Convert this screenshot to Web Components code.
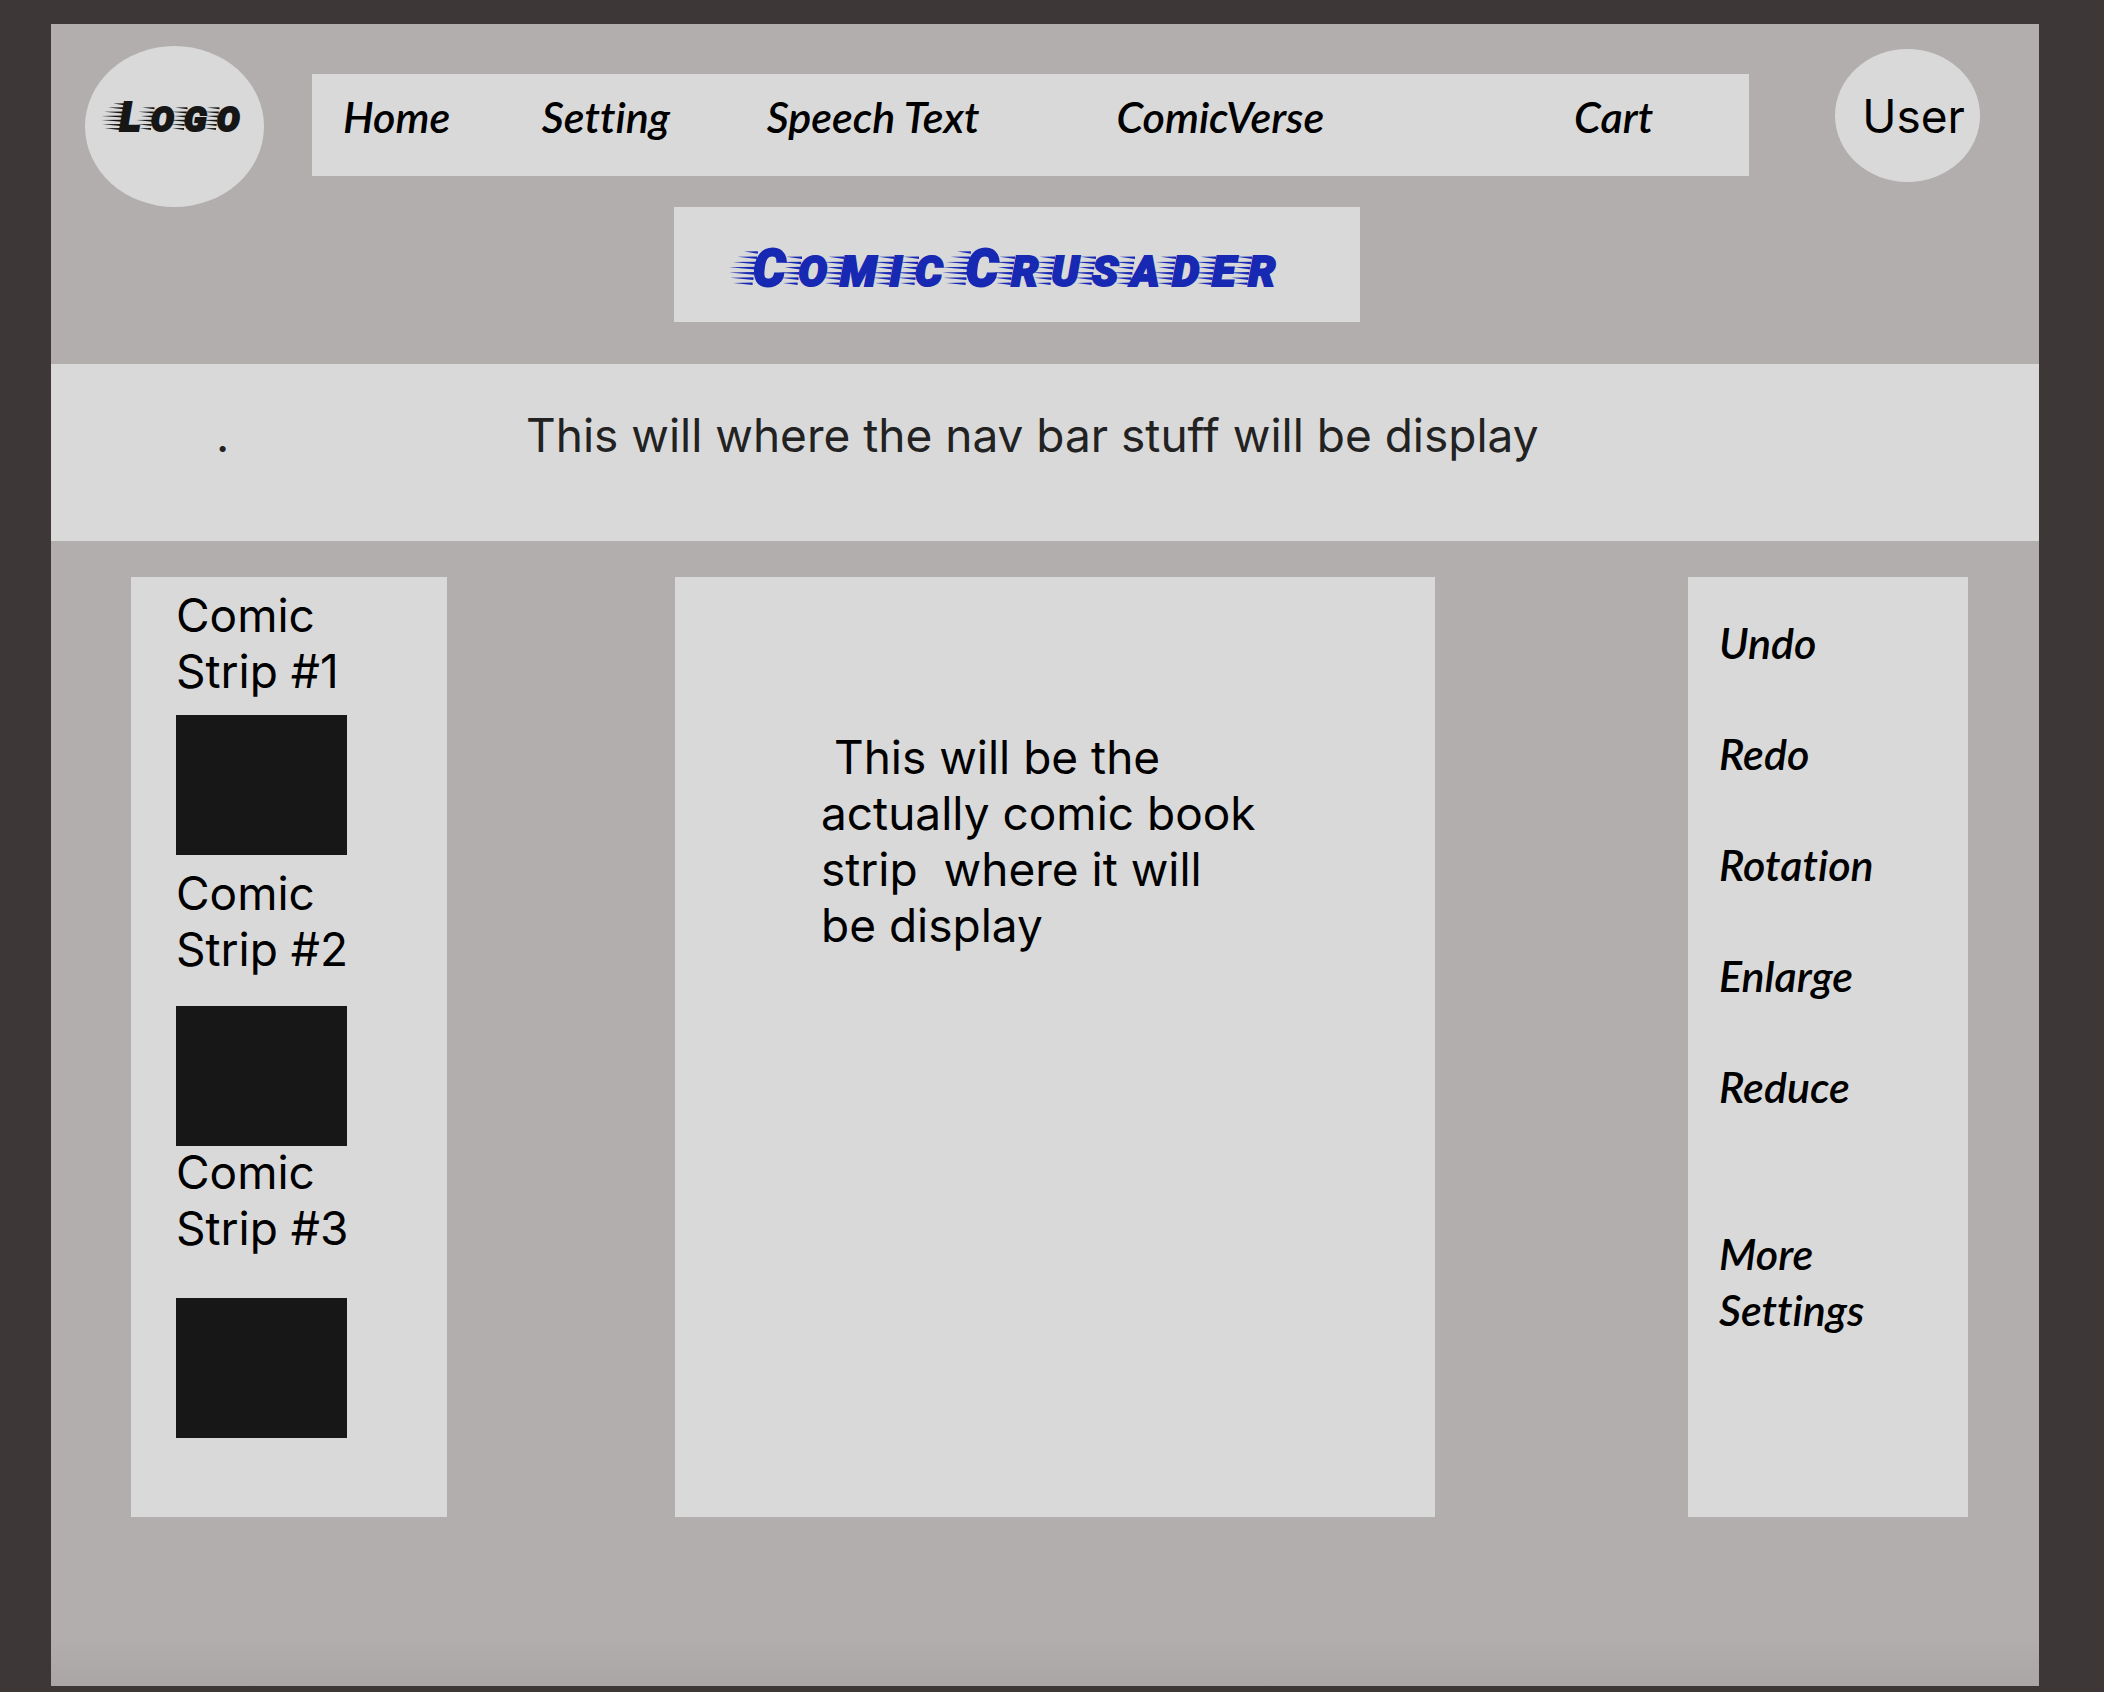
<!DOCTYPE html>
<html lang="en">
<head>
<meta charset="utf-8">
<title>Comic Crusader</title>
<meta name="viewport" content="width=device-width, initial-scale=1">
<style>
  body {
    margin: 0;
    background: #3d3737;
    color: #000;
    font-family: Inter, "Liberation Sans", sans-serif;
    font-size: 46px;
    line-height: 56px;
    --panel: #d9d9d9;
    --script: Lato, "Open Sans", sans-serif;
  }
</style>
</head>
<body>
<comic-app></comic-app>

<script>
const define = (name, html, setup) => {
  const template = document.createElement('template');
  template.innerHTML = html;
  customElements.define(name, class extends HTMLElement {
    connectedCallback() {
      if (this.shadowRoot) return;
      this.attachShadow({ mode: 'open' }).append(template.content.cloneNode(true));
      if (setup) setup(this, this.shadowRoot);
    }
  });
};

/* Lettering with tapered speed lines in front of every letter */
define('speed-text', `
  <style>
    :host { display: block; white-space: nowrap; font: italic 900 var(--small, 43px)/56px Roboto, "Liberation Sans", sans-serif; -webkit-text-stroke: 2px currentColor; }
    .big { font-size: var(--big, 51px); }
    svg { width: 0.3em; height: 0.7em; overflow: visible; fill: currentColor; }
  </style><span id="line"></span>`,
  (host, root) => {
    const line = root.getElementById('line');
    const streaks = (big) => {
      const rows = big ? 7 : 6;
      const reach = big ? [14, 20, 24, 27, 26, 24, 20] : [13, 17, 13, 18, 15, 12];
      let d = '';
      for (let i = 0; i < rows; i++) {
        const bottom = 30 - (rows - 1 - i) * 5.4;
        const right = 13 + (rows - 1 - i) * 0.9;
        d += `M${right} ${bottom}v-2.6L${right - reach[i] - (big ? 0 : 3)} ${bottom - 2.2}z`;
      }
      return `<svg viewBox="0 0 13 31" preserveAspectRatio="xMinYMax meet" aria-hidden="true"><path d="${d}"/></svg>`;
    };
    line.innerHTML = [...host.getAttribute('text')].map(c =>
      c === ' ' ? ' ' :
      c === c.toUpperCase() ? `${streaks(true)}<span class="big">${c}</span>`
                            : `${streaks(false)}${c.toUpperCase()}`).join('');
  });

define('round-badge', `
  <style>
    :host { display: flex; align-items: center; justify-content: center; box-sizing: border-box; border-radius: 50%; background: var(--panel); }
  </style><slot></slot>`);

define('nav-bar', `
  <style>
    :host { display: block; background: var(--panel); padding: 15px 0 31px 31px; }
    nav { display: grid; grid-template-columns: 199fr 225fr 350fr 458fr 175fr; }
    a { color: inherit; text-decoration: none; white-space: nowrap; font: italic 600 43px/56px var(--script); font-variant-ligatures: none; }
  </style>
  <nav>
    <a href="#home">Home</a><a href="#setting">Setting</a><a href="#speech">Speech Text</a><a href="#verse">ComicVerse</a><a href="#cart">Cart</a>
  </nav>`);

define('site-header', `
  <style>
    :host { display: block; padding-bottom: 42px; }
    .top { display: flex; align-items: flex-start; padding: 22px 59px 0 34px; }
    .logo { width: 179px; height: 161px; margin-right: 48px; padding-bottom: 16px; color: #161616; --small: 34px; --big: 40px; }
    nav-bar { flex: 1; margin-top: 28px; }
    .user { width: 145px; height: 133px; margin: 3px 0 0 86px; padding-left: 12px; }
    .title { display: grid; grid-template-columns: 623fr 686fr 679fr; }
    h1 { grid-column: 2; box-sizing: border-box; margin: 0; height: 115px; padding: 34px 0 0 66px; background: var(--panel); color: #1729b3; }
  </style>
  <div class="top">
    <round-badge class="logo"><speed-text text="Logo"></speed-text></round-badge>
    <nav-bar></nav-bar>
    <round-badge class="user">User</round-badge>
  </div>
  <div class="title"><h1><speed-text text="Comic Crusader"></speed-text></h1></div>`);

define('nav-display', `
  <style>
    :host { display: grid; grid-template-columns: 165fr 310fr 1513fr; padding: 43px 0 78px; background: var(--panel); color: #222; }
    p { margin: 0; white-space: nowrap; }
    .dot { grid-column: 2; }
  </style>
  <p class="dot">.</p><p>This will where the nav bar stuff will be display</p>`);

define('comic-strip', `
  <style>
    :host { display: block; }
    figure { margin: 0; display: flex; flex-direction: column; gap: var(--gap); }
    .frame { width: 171px; height: 140px; background: #171717; }
  </style>
  <figure><figcaption>Comic<br><slot></slot></figcaption><div class="frame"></div></figure>`);

define('strip-list', `
  <style>
    :host { display: block; padding: 10px 0 79px 45px; background: var(--panel); }
    .first { --gap: 16px; margin-bottom: 10px; }
    .second { --gap: 29px; margin-bottom: -2px; }
    .third { --gap: 42px; }
  </style>
  <comic-strip class="first">Strip #1</comic-strip>
  <comic-strip class="second">Strip #2</comic-strip>
  <comic-strip class="third">Strip #3</comic-strip>`);

define('comic-page', `
  <style>
    :host { display: block; padding: 152px 0 0 146px; background: var(--panel); }
    p { margin: 0; white-space: pre; }
  </style>
  <p> This will be the
actually comic book
strip  where it will
be display</p>`);

define('tool-panel', `
  <style>
    :host { display: flex; flex-direction: column; align-items: flex-start; gap: 55px; padding: 38px 0 0 31px; background: var(--panel); }
    button { border: 0; padding: 0; background: none; color: inherit; text-align: left; font: italic 600 43px/56px var(--script); font-variant-ligatures: none; }
    .more { margin-top: 56px; }
  </style>
  <button>Undo</button><button>Redo</button><button>Rotation</button><button>Enlarge</button><button>Reduce</button>
  <button class="more">More<br>Settings</button>`);

define('comic-app', `
  <style>
    :host { display: block; padding: 24px 65px 6px 51px; }
    .board { background: linear-gradient(to top, #aaa6a5, #b2aead 50px); padding-bottom: 169px; }
    main { display: grid; grid-template-columns: 80fr 316fr 228fr 760fr 253fr 280fr 71fr; padding-top: 36px; }
    strip-list { grid-column: 2; }
    comic-page { grid-column: 4; }
    tool-panel { grid-column: 6; }
  </style>
  <div class="board">
    <site-header></site-header>
    <nav-display></nav-display>
    <main><strip-list></strip-list><comic-page></comic-page><tool-panel></tool-panel></main>
  </div>`);
</script>
</body>
</html>
